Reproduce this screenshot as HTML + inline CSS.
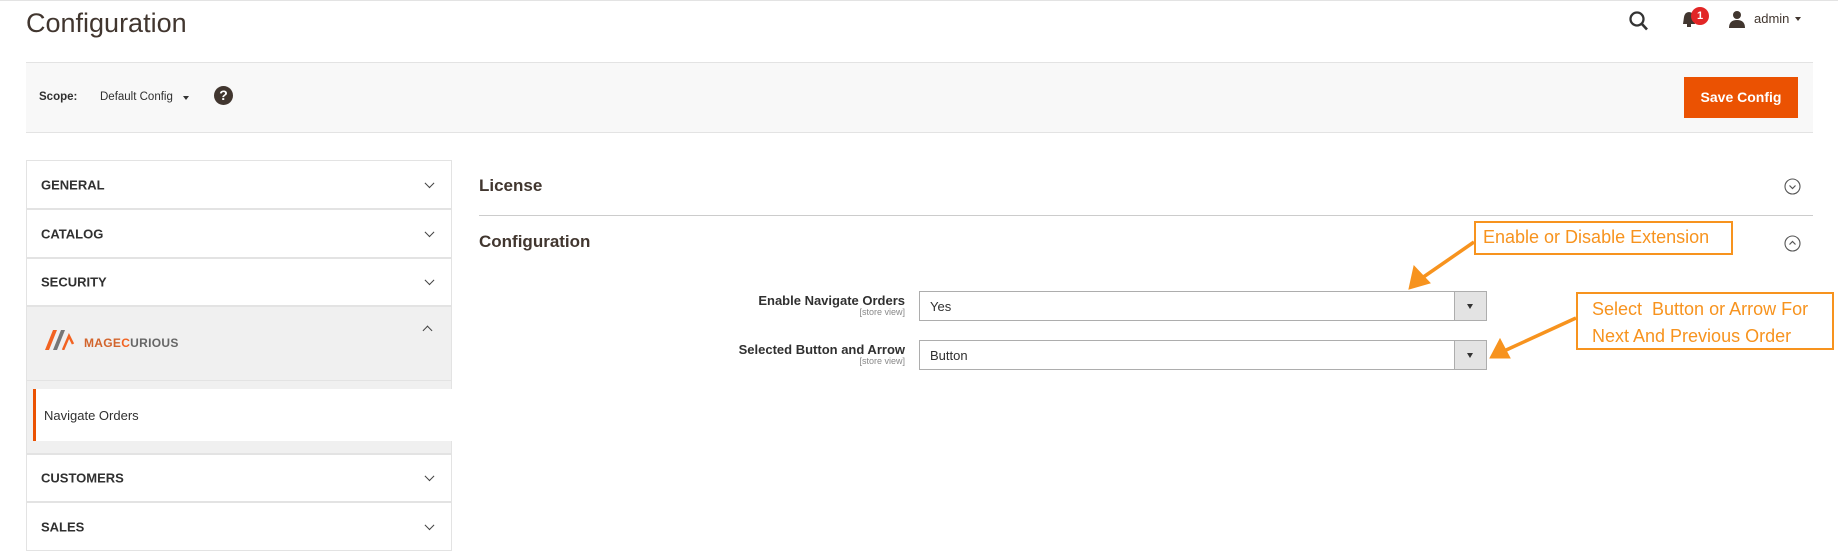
<!DOCTYPE html>
<html><head><meta charset="utf-8"><style>
*{margin:0;padding:0;box-sizing:border-box}
body{width:1838px;height:551px;background:#fff;font-family:"Liberation Sans",sans-serif;color:#303030;position:relative;overflow:hidden}
.a{position:absolute}
.row{position:absolute;left:26px;width:426px;background:#fff;border:1px solid #e3e3e3;font-weight:bold;font-size:13px;color:#303030}
.row span{position:absolute;left:14px;top:50%;transform:translateY(-50%)}
.chev{position:absolute;right:18px;top:50%;width:7px;height:7px;border-right:1.5px solid #444;border-bottom:1.5px solid #444;transform:translateY(-75%) rotate(45deg)}
.sel{position:absolute;left:919px;width:568px;height:30px;border:1px solid #adadad;background:#fff;font-size:13px}
.sel span{position:absolute;left:10px;top:7px}
.sel i{position:absolute;right:0;top:0;width:32px;height:28px;background:#e3e3e3;border-left:1px solid #adadad}
.sel i:after{content:"";position:absolute;left:12px;top:12px;border-left:3px solid transparent;border-right:3px solid transparent;border-top:5px solid #333}
.lbl{position:absolute;right:933px;text-align:right;font-weight:bold;font-size:13px}
.sv{position:absolute;right:933px;font-size:9px;color:#888}
.ann{position:absolute;border:2px solid #f7931e;color:#f7931e;font-size:18px;background:#fff}
</style></head><body>
<div class="a" style="left:0;top:0;width:1838px;height:1px;background:#e3e3e3"></div>
<div class="a" style="left:26px;top:8px;font-size:27px;color:#41362f">Configuration</div>
<svg class="a" style="left:1628px;top:10px" width="22" height="22" viewBox="0 0 22 22"><circle cx="9" cy="9" r="6.5" fill="none" stroke="#333" stroke-width="2.3"/><path d="M13.5 13.5 L19 19.5" stroke="#333" stroke-width="2.6"/></svg>
<svg class="a" style="left:1680px;top:10px" width="18" height="18" viewBox="0 0 18 18"><path d="M3 14 L4 7 Q5 2 9 2 Q13 2 14 7 L15 14 Z" fill="#41362f"/><rect x="7" y="14" width="4" height="3" fill="#41362f"/></svg>
<div class="a" style="left:1691px;top:7px;width:18px;height:18px;border-radius:9px;background:#e22626;color:#fff;font-size:11px;font-weight:bold;text-align:center;line-height:18px">1</div>
<svg class="a" style="left:1728px;top:10px" width="18" height="18" viewBox="0 0 18 18"><circle cx="9" cy="5" r="4" fill="#41362f"/><path d="M1 18 Q1 10 9 10 Q17 10 17 18 Z" fill="#41362f"/></svg>
<div class="a" style="left:1754px;top:11px;font-size:13px;color:#41362f">admin</div>
<div class="a" style="left:1795px;top:17px;border-left:3px solid transparent;border-right:3px solid transparent;border-top:4px solid #41362f"></div>

<div class="a" style="left:26px;top:62px;width:1787px;height:71px;background:#f8f8f8;border-top:1px solid #e3e3e3;border-bottom:1px solid #e3e3e3"></div>
<div class="a" style="left:39px;top:91px;font-size:11.5px;font-weight:bold">Scope:</div>
<div class="a" style="left:100px;top:91px;font-size:11.5px">Default Config</div>
<div class="a" style="left:183px;top:96px;border-left:3px solid transparent;border-right:3px solid transparent;border-top:4px solid #333"></div>
<div class="a" style="left:214px;top:86px;width:19px;height:19px;border-radius:50%;background:#41362f;color:#fff;font-weight:bold;font-size:14px;text-align:center;line-height:19px">?</div>
<div class="a" style="left:1684px;top:77px;width:114px;height:41px;background:#eb5202;color:#fff;font-size:14px;font-weight:bold;text-align:center;line-height:41px">Save Config</div>

<div class="row" style="top:160px;height:49px"><span>GENERAL</span><b class="chev"></b></div>
<div class="row" style="top:209px;height:49px"><span>CATALOG</span><b class="chev"></b></div>
<div class="row" style="top:258px;height:48px"><span>SECURITY</span><b class="chev"></b></div>
<div class="row" style="top:306px;height:148px;background:#f0f0f0"></div>
<div class="a" style="left:424px;top:327px;width:7px;height:7px;border-left:1.5px solid #444;border-top:1.5px solid #444;transform:rotate(45deg)"></div>
<svg class="a" style="left:45px;top:330px" width="36" height="20" viewBox="0 0 36 20"><path d="M0 20 L8 0 L12 0 L4 20Z" fill="#f26322"/><path d="M8 20 L16 0 L20 0 L12 20Z" fill="#777"/><path d="M18 20 L24 6 L28 14" stroke="#f26322" stroke-width="2.5" fill="none"/></svg>
<div class="a" style="left:84px;top:336px;font-size:12px;font-weight:bold;color:#666;letter-spacing:0.3px"><span style="color:#d2642c">MAGE</span><span style="color:#f26322">C</span>URIOUS</div>
<div class="a" style="left:26px;top:380px;width:426px;height:1px;background:#e3e3e3"></div>
<div class="a" style="left:33px;top:389px;width:419px;height:52px;background:#fff;border-left:3px solid #eb5202"></div>
<div class="a" style="left:44px;top:408px;font-size:13px">Navigate Orders</div>
<div class="row" style="top:454px;height:48px"><span>CUSTOMERS</span><b class="chev"></b></div>
<div class="row" style="top:502px;height:49px"><span>SALES</span><b class="chev"></b></div>

<div class="a" style="left:479px;top:176px;font-size:17px;font-weight:bold;color:#41362f">License</div>
<div class="a" style="left:479px;top:215px;width:1334px;height:1px;background:#ccc"></div>
<div class="a" style="left:479px;top:232px;font-size:17px;font-weight:bold;color:#41362f">Configuration</div>
<svg class="a" style="left:1784px;top:178px" width="17" height="17" viewBox="0 0 17 17"><circle cx="8.5" cy="8.5" r="7.5" fill="none" stroke="#555" stroke-width="1.1"/><path d="M5.5 7.5 L8.5 10.5 L11.5 7.5" fill="none" stroke="#555" stroke-width="1.2"/></svg>
<svg class="a" style="left:1784px;top:235px" width="17" height="17" viewBox="0 0 17 17"><circle cx="8.5" cy="8.5" r="7.5" fill="none" stroke="#555" stroke-width="1.1"/><path d="M5.5 9.5 L8.5 6.5 L11.5 9.5" fill="none" stroke="#555" stroke-width="1.2"/></svg>

<div class="lbl" style="top:293px">Enable Navigate Orders</div>
<div class="sv" style="top:307px">[store view]</div>
<div class="lbl" style="top:342px">Selected Button and Arrow</div>
<div class="sv" style="top:356px">[store view]</div>
<div class="sel" style="top:291px"><span>Yes</span><i></i></div>
<div class="sel" style="top:340px"><span>Button</span><i></i></div>

<div class="ann" style="left:1474px;top:221px;width:259px;height:34px;padding:4px 7px">Enable or Disable Extension</div>
<div class="ann" style="left:1576px;top:292px;width:258px;height:58px;padding:2px 14px;line-height:27px">Select&nbsp; Button or Arrow For<br>Next And Previous Order</div>
<svg class="a" style="left:0;top:0" width="1838" height="551"><g stroke="#f7931e" fill="#f7931e"><path d="M1474 242 L1422 278" stroke-width="3.5"/><path d="M1409 289 L1414 266 L1430 283Z"/><path d="M1576 318 L1504 351" stroke-width="3.5"/><path d="M1490 358 L1500 339 L1510 358Z"/></g></svg>
</body></html>
